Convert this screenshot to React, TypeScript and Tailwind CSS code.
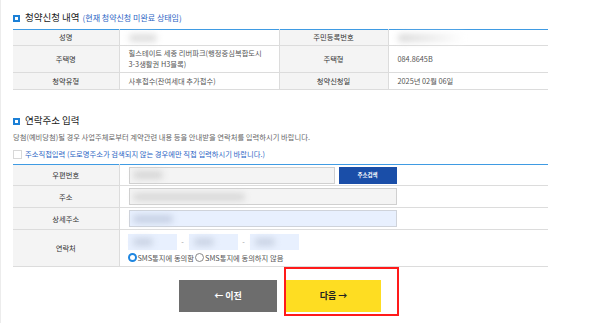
const font = { fontFamily: '"Noto Sans CJK KR", "Noto Sans", sans-serif' };

function SectionTitle({ title, note }: { title: string; note?: string }) {
    return (
        <div className="flex h-[12px] items-center">
            <span className="mr-[5px] h-[7px] w-[7px] border-2 border-[#1c80d6] bg-white" />
            <span className="text-[9.5px] leading-none font-normal text-[#222]">{title}</span>
            {note && <span className="ml-[3px] text-[8px] leading-none text-[#2a63c4]">{note}</span>}
        </div>
    );
}

// 개인정보 블러 처리
function Blur({ w, tone = 'bg-[#d9d9d9]' }: { w: string; tone?: string }) {
    return <span className={`block h-[8px] rounded-full blur-[3px] ${w} ${tone}`} />;
}

const th = 'bg-[#f4f4f4] text-center text-[#333] font-normal border-b border-r border-[#dcdcdc] align-middle';
const td = 'text-left text-[#555] border-b border-[#dcdcdc] align-middle';

export default function App() {
    return (
        <div className="h-[323px] w-[600px] overflow-hidden border-l border-[#ececec] bg-white pl-[12px] pr-[53px] pt-[12px]" style={font}>
            {/* 청약신청 내역 */}
            <SectionTitle title="청약신청 내역" note="(현재 청약신청 미완료 상태임)" />
            <table className="mt-[5px] w-[535px] table-fixed border-collapse border-t border-[#3f9be3] text-[7.3px] leading-[11px]">
                <colgroup>
                    <col className="w-[106px]" />
                    <col className="w-[160px]" />
                    <col className="w-[109px]" />
                    <col className="w-[160px]" />
                </colgroup>
                <tbody>
                    <tr className="h-[16px]">
                        <th className={th}>성명</th>
                        <td className={`${td} border-r pl-[9px]`}><Blur w="w-[28px]" tone="bg-[#dedede]" /></td>
                        <th className={th}>주민등록번호</th>
                        <td className={`${td} pl-[9px]`}><Blur w="w-[66px]" tone="bg-gradient-to-r from-[#d8d8d8] to-white" /></td>
                    </tr>
                    <tr className="h-[27px]">
                        <th className={th}>주택명</th>
                        <td className={`${td} border-r pl-[9px]`}>힐스테이트 세종 리버파크(행정중심복합도시<br />3-3생활권 H3블록)</td>
                        <th className={th}>주택형</th>
                        <td className={`${td} pl-[9px]`}>084.8645B</td>
                    </tr>
                    <tr className="h-[17px]">
                        <th className={th}>청약유형</th>
                        <td className={`${td} border-r pl-[9px]`}>사후접수(잔여세대 추가접수)</td>
                        <th className={th}>청약신청일</th>
                        <td className={`${td} pl-[9px]`}>2025년 02월 06일</td>
                    </tr>
                </tbody>
            </table>

            {/* 연락주소 입력 */}
            <div className="mt-[25px]">
                <SectionTitle title="연락주소 입력" />
            </div>
            <p className="mt-[5px] text-[7.3px] leading-[10px] text-[#666]">
                당첨(예비당첨)될 경우 사업주체로부터 계약관련 내용 등을 안내받을 연락처를 입력하시기 바랍니다.
            </p>
            <label className="mt-[7px] flex items-center gap-[3px] text-[7.3px] leading-[10px] text-[#2a63c4]">
                <span className="h-[9px] w-[9px] border border-[#d8d8d8] bg-white" />
                주소직접입력 (도로명주소가 검색되지 않는 경우에만 직접 입력하시기 바랍니다.)
            </label>

            <table className="mt-[5px] w-[535px] table-fixed border-collapse border-t border-[#3f9be3] text-[7.3px] leading-[10px]">
                <colgroup>
                    <col className="w-[106px]" />
                    <col className="w-[429px]" />
                </colgroup>
                <tbody>
                    <tr className="h-[21px]">
                        <th className={th}>우편번호</th>
                        <td className={`${td} pl-[9px]`}>
                            <div className="flex items-center gap-[4px]">
                                <div className="flex h-[17px] w-[206px] items-center border border-[#d0d0d0] bg-[#f4f4f4] pl-[3px]">
                                    <Blur w="w-[30px]" tone="bg-[#d6d6d6]" />
                                </div>
                                <button className="h-[17px] w-[58px] bg-[#1a4ea8] text-[5.5px] font-bold text-white">주소검색</button>
                            </div>
                        </td>
                    </tr>
                    <tr className="h-[22px]">
                        <th className={th}>주소</th>
                        <td className={`${td} pl-[9px]`}>
                            <div className="flex h-[17px] w-[268px] items-center border border-[#d0d0d0] bg-[#f4f4f4] pl-[3px]">
                                <Blur w="w-[112px]" tone="bg-[#d8d8d8]" />
                            </div>
                        </td>
                    </tr>
                    <tr className="h-[22px]">
                        <th className={th}>상세주소</th>
                        <td className={`${td} pl-[9px]`}>
                            <div className="flex h-[17px] w-[268px] items-center border border-[#cfd3da] bg-[#e8f0fe] pl-[3px]">
                                <Blur w="w-[40px]" tone="bg-[#c6d0e4]" />
                            </div>
                        </td>
                    </tr>
                    <tr className="h-[37px]">
                        <th className={th}>연락처</th>
                        <td className={`${td} pl-[8px]`}>
                            <div className="flex items-center text-[#999]">
                                <div className="flex h-[16px] w-[49px] items-center bg-[#e8f0fe] pl-[5px]"><Blur w="w-[20px]" tone="bg-[#cad3e4]" /></div>
                                <span className="w-[12px] text-center">-</span>
                                <div className="flex h-[16px] w-[49px] items-center bg-[#e8f0fe] pl-[5px]"><Blur w="w-[20px]" tone="bg-[#cad3e4]" /></div>
                                <span className="w-[12px] text-center">-</span>
                                <div className="flex h-[16px] w-[49px] items-center bg-[#e8f0fe] pl-[5px]"><Blur w="w-[20px]" tone="bg-[#cad3e4]" /></div>
                            </div>
                            <div className="mt-[3px] flex items-center text-[#555]">
                                <span className="mr-[1px] h-[9px] w-[9px] rounded-full border-[2px] border-[#1f86e0] bg-white" />
                                <span>SMS통지에 동의함</span>
                                <span className="mx-[1px] h-[9px] w-[9px] rounded-full border border-[#888] bg-white" />
                                <span>SMS통지에 동의하지 않음</span>
                            </div>
                        </td>
                    </tr>
                </tbody>
            </table>

            {/* 버튼 */}
            <div className="mt-[13px] flex justify-center gap-[9px]">
                <button className="h-[32px] w-[98px] bg-[#6d6d6d] text-[9px] font-bold text-white">← 이전</button>
                <div className="relative">
                    <button className="h-[32px] w-[95px] bg-[#fedd22] text-[9px] font-bold text-[#222]">다음 →</button>
                    <span className="absolute left-[-2px] top-[-13px] h-[49px] w-[115px] border-2 border-[#ff1a1a]" />
                </div>
            </div>
        </div>
    );
}
